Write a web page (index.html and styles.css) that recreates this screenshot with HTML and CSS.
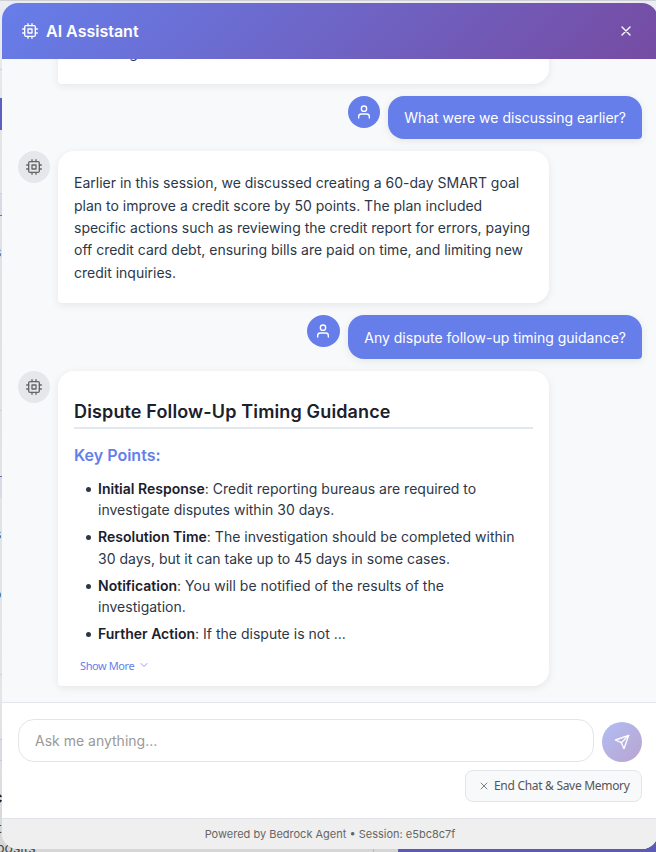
FILE: index.html
```html
<!DOCTYPE html>
<html lang="en">
<head>
<meta charset="utf-8">
<title>AI Assistant</title>
<link rel="stylesheet" href="styles.css">
</head>
<body>
<svg class="sprite" aria-hidden="true">
  <symbol id="cpu" viewBox="0 0 24 24"><rect x="4" y="4" width="16" height="16" rx="2"/><rect x="9" y="9" width="6" height="6"/><path d="M9 1v3M15 1v3M9 20v3M15 20v3M20 9h3M20 15h3M1 9h3M1 15h3"/></symbol>
  <symbol id="user" viewBox="0 0 24 24"><path d="M20 21v-2a4 4 0 0 0-4-4H8a4 4 0 0 0-4 4v2"/><circle cx="12" cy="7" r="4"/></symbol>
  <symbol id="close" viewBox="0 0 24 24"><path d="M18 6 6 18M6 6l12 12"/></symbol>
  <symbol id="down" viewBox="0 0 24 24"><path d="m6 9 6 6 6-6"/></symbol>
  <symbol id="send" viewBox="0 0 24 24"><path d="m22 2-7 20-4-9-9-4Z"/><path d="M22 2 11 13"/></symbol>
</svg>
<div class="backdrop" aria-hidden="true">
  <i class="rule r1"></i><i class="rule r2"></i><i class="block b1"></i>
  <i class="rule r3"></i><i class="block b2"></i><i class="rule r4"></i><i class="block b3"></i><i class="rule r5"></i><i class="block b4"></i>
  <span class="behind s1">s</span><span class="behind s2">s</span><span class="behind s3">o</span><span class="behind s4">c</span><span class="behind s5">t</span><span class="behind s6">posits</span>
  <i class="divider"></i><i class="banner"></i>
</div>
<main class="panel">
  <header class="header">
    <svg class="icon"><use href="#cpu"/></svg>
    <h1>AI Assistant</h1>
    <button class="close" aria-label="Close"><svg class="icon"><use href="#close"/></svg></button>
  </header>
  <section class="messages">
    <div class="row previous"><div class="bubble bot"><p>on saving.</p></div></div>
    <div class="row user">
      <div class="avatar"><svg class="icon"><use href="#user"/></svg></div>
      <div class="bubble">What were we discussing earlier?</div>
    </div>
    <div class="row">
      <div class="avatar"><svg class="icon"><use href="#cpu"/></svg></div>
      <div class="bubble bot answer"><p>Earlier in this session, we discussed creating a 60-day SMART goal plan to improve a credit score by 50 points. The plan included specific actions such as reviewing the credit report for errors, paying off credit card debt, ensuring bills are paid on time, and limiting new credit inquiries.</p></div>
    </div>
    <div class="row user">
      <div class="avatar wide"><svg class="icon"><use href="#user"/></svg></div>
      <div class="bubble tall">Any dispute follow-up timing guidance?</div>
    </div>
    <div class="row">
      <div class="avatar"><svg class="icon"><use href="#cpu"/></svg></div>
      <div class="bubble bot rich">
        <h2>Dispute Follow-Up Timing Guidance</h2>
        <h3>Key Points:</h3>
        <ul>
          <li><strong>Initial Response</strong>: Credit reporting bureaus are required to investigate disputes within 30 days.</li>
          <li><strong>Resolution Time</strong>: The investigation should be completed within 30 days, but it can take up to 45 days in some cases.</li>
          <li><strong>Notification</strong>: You will be notified of the results of the investigation.</li>
          <li><strong>Further Action</strong>: If the dispute is not ...</li>
        </ul>
        <button class="more">Show More <svg class="icon"><use href="#down"/></svg></button>
      </div>
    </div>
  </section>
  <section class="composer">
    <div class="entry">
      <input type="text" placeholder="Ask me anything..." aria-label="Message">
      <button class="send" aria-label="Send"><svg class="icon"><use href="#send"/></svg></button>
    </div>
    <button class="end"><svg class="icon"><use href="#close"/></svg>End Chat &amp; Save Memory</button>
  </section>
  <footer class="footer">Powered by Bedrock Agent • Session: e5bc8c7f</footer>
</main>
</body>
</html>
```
FILE: styles.css
```css
* { box-sizing: border-box; }
body { margin: 0; width: 656px; height: 852px; overflow: hidden; position: relative; background: #e5e5e7; font-family: Inter, "Liberation Sans", sans-serif; }
button, input { font: inherit; margin: 0; }
.sprite { position: absolute; width: 0; height: 0; }
.icon { width: 16px; height: 16px; flex: none; display: block; fill: none; stroke: currentColor; stroke-width: 2; stroke-linecap: round; stroke-linejoin: round; }

/* Page behind the chat panel */
.backdrop { position: absolute; inset: 0; overflow: hidden; background: linear-gradient(#ececf3 0, #e5e5e7 120px, #e1e1e3 300px, #e5e5e7 700px, #d6d6d6 852px); }
.backdrop > * { position: absolute; }
.rule { left: 0; width: 100%; height: 1px; background: #cfcfd6; }
.r1 { top: 0; } .r2 { top: 69px; } .r3 { top: 193px; } .r4 { top: 410px; } .r5 { top: 674px; }
.block { left: 0; width: 2px; }
.b1 { top: 98px; height: 32px; background: #5b5fc0; }
.b2 { top: 194px; height: 22px; background: #d9d9e8; border-bottom: 1px solid #6070c0; }
.b3 { top: 476px; height: 22px; background: #d9d9e8; border-top: 1px solid #6070c0; }
.b4 { top: 739px; height: 22px; background: #dadae4; border-top: 1px solid #c8c8d0; border-bottom: 1px solid #c8c8d0; }
.behind { color: #444; font-size: 14px; line-height: 16px; }
.s1 { left: -6px; top: 244px; } .s2 { left: -6px; top: 526px; } .s3 { left: -7px; top: 586px; }
.s4 { left: -7px; top: 789px; font-weight: 700; font-size: 16px; color: #222; }
.s5 { left: -3px; top: 820px; } .s6 { left: -4px; top: 840px; }
.divider { left: 373px; top: 849px; width: 1px; height: 3px; background: #bbb; }
.banner { left: 398px; right: 0; top: 830px; bottom: 0; background: #5b5bb3; }

.panel { position: relative; width: 656px; height: 846px; margin: 3px 0 0 2px; border-radius: 16px; overflow: hidden; display: flex; flex-direction: column; background: #fff; }
.header { height: 56px; flex: none; display: flex; align-items: center; gap: 8px; padding: 0 24px 0 20px; color: #fff; background: linear-gradient(135deg, #667eea 0%, #764ba2 100%); }
.header h1 { margin: 0; font-size: 16px; line-height: 24px; font-weight: 600; }
.close { margin-left: auto; padding: 0; border: 0; background: none; color: inherit; }

.messages { flex: 1; min-height: 0; overflow: hidden; display: flex; flex-direction: column; justify-content: flex-end; gap: 12px; padding: 0 16px 16px; background: #f8f9fb; }
.row { display: flex; align-items: flex-start; gap: 8px; flex: none; }
.user { justify-content: flex-end; }
.previous { padding-left: 40px; }
.avatar { width: 32px; height: 32px; border-radius: 50%; flex: none; display: grid; place-items: center; background: #e5e7eb; color: #666; }
.user .avatar { background: #667eea; color: #fff; }
.user .wide { width: 33px; padding-right: 1px; }
.bubble { height: 43px; padding: 11px 16px 0; border-radius: 16px 16px 4px 16px; background: #667eea; color: #fff; font-size: 14px; line-height: 22.4px; box-shadow: 0 2px 8px rgba(0, 0, 0, .08); }
.tall { height: 44px; padding-top: 11.6px; }
.bot { width: 491px; height: auto; padding: 12px 16px; border-radius: 16px 16px 16px 4px; background: #fff; color: #2d3748; }
.bot p { margin: 8px 0; }
.answer { height: 152px; }
.answer p { margin: 9.2px 0 0; }
.rich { height: 315px; padding: 28px 16px 0; }
.rich h2 { margin: 0; padding-bottom: 3px; border-bottom: 2px solid #e2e8f0; font-size: 18px; line-height: 25px; font-weight: 600; letter-spacing: .14px; color: #1a202c; }
.rich h3 { margin: 15px 0 12px; font-size: 16px; line-height: 22px; font-weight: 600; color: #667eea; }
.rich ul { margin: 0; padding-left: 24px; list-style: none; }
.rich li { margin-bottom: 5.6px; line-height: 21.4px; letter-spacing: .01px; }
.rich li::before { content: ""; display: inline-block; width: 5px; height: 5px; margin: 0 7px 2px -12px; border-radius: 50%; background: #2d3748; }
.rich strong { font-weight: 600; color: #1a202c; }
.more { display: flex; align-items: center; gap: 4px; margin: 13px 0 0 6px; padding: 0; border: 0; background: none; color: #667eea; font: 11px/16px "Noto Sans", sans-serif; letter-spacing: -.4px; }
.more .icon { width: 12px; height: 12px; margin-top: -2px; stroke-width: 1.5; }

.composer { height: 116px; flex: none; border-top: 1px solid #e2e5ec; padding: 16px 16px 0; display: flex; flex-direction: column; align-items: flex-end; gap: 8px; }
.entry { width: 100%; display: flex; align-items: flex-end; gap: 8px; }
.entry input { flex: 1; min-width: 0; height: 43px; padding: 0 16px; border: 1px solid #e2e5ea; border-radius: 16px; outline: 0; background: #fff; font-size: 14px; }
.entry input::placeholder { color: #999; opacity: 1; }
.send { width: 40px; height: 40px; padding: 0; border: 0; border-radius: 50%; display: grid; place-items: center; color: #fff; background: linear-gradient(135deg, #667eea, #764ba2); opacity: .5; }
.end { width: 177px; height: 32px; display: flex; align-items: center; gap: 4px; padding: 0 12px; border: 1px solid #e2e5ea; border-radius: 8px; background: #f8f9fb; color: #555; font: 12px/16px "Noto Sans", sans-serif; letter-spacing: -.3px; white-space: nowrap; }
.end .icon { width: 12px; height: 12px; stroke-width: 1.5; }
.footer { height: 31px; flex: none; border-top: 1px solid #e0e2e8; background: #efefef; color: #666; text-align: center; font-size: 11px; line-height: 30px; }
```
